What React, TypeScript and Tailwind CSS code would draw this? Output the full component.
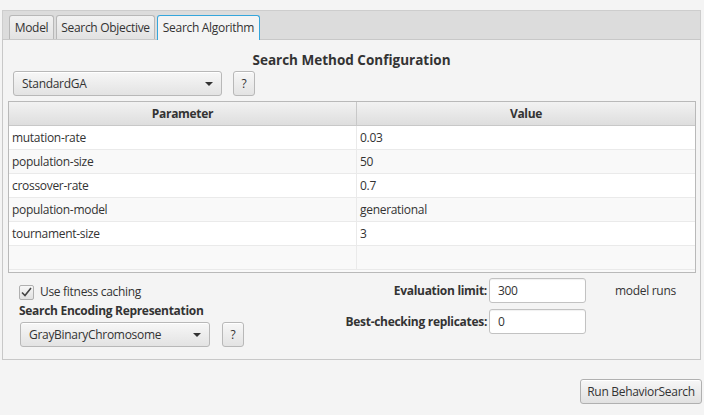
import React from "react";

function Arrow() {
  return (
    <svg width="8" height="4" viewBox="0 0 8 4" className="shrink-0">
      <path d="M0 0 L8 0 L4 4 Z" fill="#333" />
    </svg>
  );
}

function Combo({ label, w }: { label: string; w: string }) {
  return (
    <div
      className={`${w} h-[25px] box-border flex items-center justify-between pl-[8px] pr-[8px] rounded-[3px] border border-[#b8b8b8] bg-gradient-to-b from-[#f7f7f7] to-[#e3e3e3] shadow-[inset_0_1px_0_#ffffff]`}
    >
      <span>{label}</span>
      <Arrow />
    </div>
  );
}

function Help() {
  return (
    <div className="w-[22px] h-[25px] box-border flex items-center justify-center rounded-[3px] border border-[#b8b8b8] bg-gradient-to-b from-[#f7f7f7] to-[#e3e3e3] shadow-[inset_0_1px_0_#ffffff]">
      ?
    </div>
  );
}

function Field({ value }: { value: string }) {
  return (
    <div className="w-[97px] h-[25px] box-border flex items-center pl-[8px] rounded-[3px] border border-[#c2c2c2] bg-white shadow-[inset_0_1px_1px_rgba(0,0,0,0.06)]">
      {value}
    </div>
  );
}

export default function App() {
  const rows: [string, string][] = [
    ["mutation-rate", "0.03"],
    ["population-size", "50"],
    ["crossover-rate", "0.7"],
    ["population-model", "generational"],
    ["tournament-size", "3"],
    ["", ""],
  ];
  return (
    <div className="w-[704px] h-[415px] overflow-hidden bg-[#f4f4f4] text-[#333333] text-[12px] leading-[16px] font-['Open_Sans',sans-serif] tracking-[-0.3px]">
      <div className="pt-[10px] pl-[2px]">
        {/* tab header */}
        <div className="w-[699px] h-[29px] box-border border-t border-l border-r border-[#cdcdcd] bg-[#dcdcdc] flex items-end pl-[6px] gap-[2px]">
          <div className="w-[45px] h-[24px] box-border flex items-center justify-center rounded-t-[3px] border border-b-0 border-[#b8b8b8] bg-gradient-to-b from-[#f2f2f2] to-[#e2e2e2] pt-[1px]">
            Model
          </div>
          <div className="w-[99px] h-[24px] box-border flex items-center justify-center rounded-t-[3px] border border-b-0 border-[#b8b8b8] bg-gradient-to-b from-[#f2f2f2] to-[#e2e2e2] pt-[1px]">
            Search Objective
          </div>
          <div className="relative z-10 -mb-[1px] w-[103px] h-[25px] box-border flex items-center justify-center rounded-t-[3px] border border-b-0 border-[#35a6dc] bg-[#f4f4f4]">
            Search Algorithm
          </div>
        </div>
        {/* content panel */}
        <div className="w-[699px] h-[321px] box-border border border-[#c8c8c8] bg-[#f4f4f4] flex flex-col">
          <div className="pt-[11px] h-[29px] box-border text-center font-bold text-[13.5px] leading-[18px] tracking-[0px]">
            Search Method Configuration
          </div>
          <div className="mt-[2px] ml-[10px] flex items-center gap-[11px]">
            <Combo label="StandardGA" w="w-[209px]" />
            <Help />
          </div>
          {/* table */}
          <div className="mt-[5px] ml-[5px] w-[688px] h-[172px] box-border border border-[#b9b9b9] bg-[#f9f9f9] flex flex-col">
            <div className="h-[24px] box-border flex border-b border-[#c8c8c8] bg-gradient-to-b from-[#f2f2f2] to-[#dedede] font-bold">
              <div className="w-[348px] box-border border-r border-[#c8c8c8] flex items-center justify-center">
                Parameter
              </div>
              <div className="flex-1 flex items-center justify-center">Value</div>
            </div>
            {rows.map(([p, v], i) => (
              <div
                key={i}
                className={`h-[24px] box-border flex border-b border-[#eaeaea] ${
                  i % 2 === 0 ? "bg-white" : "bg-[#f9f9f9]"
                }`}
              >
                <div className="w-[348px] box-border border-r border-[#eaeaea] flex items-center pl-[3px]">
                  {p}
                </div>
                <div className="flex-1 flex items-center pl-[3px]">{v}</div>
              </div>
            ))}
          </div>
          {/* bottom section */}
          <div className="flex">
            <div className="w-[320px] pl-[16px] flex flex-col">
              <div className="mt-[10px] h-[18px] flex items-center gap-[6px]">
                <div className="w-[15px] h-[15px] box-border rounded-[2px] border border-[#b0b0b0] bg-gradient-to-b from-[#f7f7f7] to-[#e1e1e1] flex items-center justify-center">
                  <svg width="11" height="10" viewBox="0 0 11 10">
                    <path d="M1 5.5 L4 8.5 L10 1" stroke="#444" strokeWidth="1.6" fill="none" />
                  </svg>
                </div>
                <span>Use fitness caching</span>
              </div>
              <div className="h-[20px] flex items-center font-bold whitespace-nowrap">Search Encoding Representation</div>
              <div className="mt-[1px] ml-[1px] flex items-center gap-[12px]">
                <Combo label="GrayBinaryChromosome" w="w-[190px]" />
                <Help />
              </div>
            </div>
            <div className="flex-1 grid grid-cols-[164px_97px_auto] gap-x-[2px] gap-y-[6px] mt-[5px] items-center content-start">
              <div className="flex justify-end font-bold whitespace-nowrap">Evaluation limit:</div>
              <Field value="300" />
              <div className="pl-[27px]">model runs</div>
              <div className="flex justify-end font-bold whitespace-nowrap">Best-checking replicates:</div>
              <Field value="0" />
              <div />
            </div>
          </div>
        </div>
      </div>
      <div className="mt-[19px] flex justify-end pr-[2px]">
        <div className="w-[122px] h-[25px] box-border flex items-center justify-center rounded-[3px] border border-[#b0b0b0] bg-gradient-to-b from-[#f7f7f7] to-[#e1e1e1] shadow-[inset_0_1px_0_#ffffff]">
          Run BehaviorSearch
        </div>
      </div>
    </div>
  );
}
